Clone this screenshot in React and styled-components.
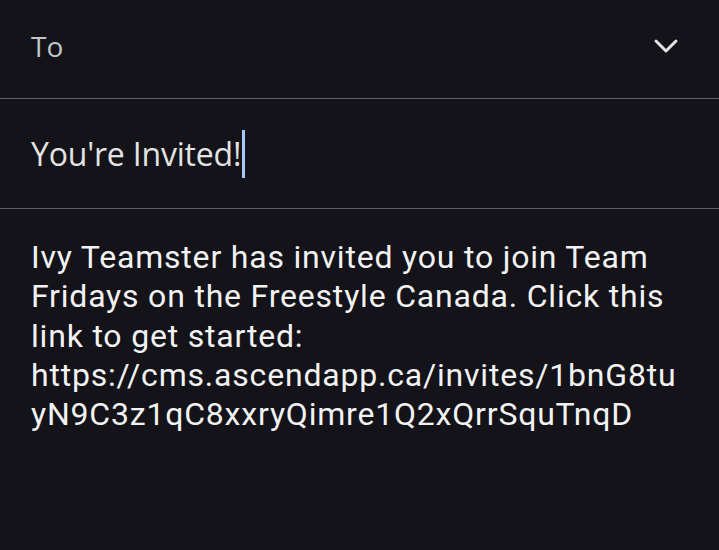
import React from 'react';
import styled, {createGlobalStyle} from 'styled-components';

const Global = createGlobalStyle`
  html, body {
    margin: 0;
    background: #131319;
  }
`

const Screen = styled.div`
  width: 719px;
  height: 550px;
  background: #131319;
  display: flex;
  flex-direction: column;
  overflow: hidden;
`

const Row = styled.div`
  height: ${props => props.h}px;
  display: flex;
  align-items: center;
  padding: 0 31px ${props => props.lift || 0}px;
  border-bottom: 1px solid #5c5f64;
  box-sizing: border-box;
`

const Label = styled.span`
  flex: 1;
  font-family: "Open Sans", sans-serif;
  font-size: 28px;
  color: #c4c7c5;
`

const Chevron = styled.svg`
  width: 26px;
  height: 18px;
  margin-right: 9px;
`

const Subject = styled.span`
  font-family: "Open Sans", sans-serif;
  font-size: 32px;
  letter-spacing: -0.2px;
  color: #e3e3e3;
  display: flex;
  align-items: center;
`

const Caret = styled.span`
  display: inline-block;
  width: 3px;
  height: 48px;
  margin-left: 1px;
  background: #a8c7fa;
`

const Body = styled.div`
  padding: 29px 31px;
  font-family: Roboto, sans-serif;
  font-size: 32px;
  letter-spacing: 0.8px;
  line-height: 39.3px;
  color: #f2f2f2;
  overflow-wrap: anywhere;
  width: 650px;
`

const App = () => {
  return (
    <>
      <Global/>
      <Screen>
        <Row h={99} lift={6}>
          <Label>To</Label>
          <Chevron viewBox="0 0 26 18">
            <path d="M3 4L13 14L23 4" fill="none" stroke="#e3e3e3" strokeWidth="3" strokeLinecap="round" strokeLinejoin="round"/>
          </Chevron>
        </Row>
        <Row h={110}>
          <Subject>You're Invited!<Caret/></Subject>
        </Row>
        <Body>
          Ivy Teamster has invited you to join Team Fridays on the Freestyle Canada. Click this link to get started: https://cms.ascendapp.ca/invites/1bnG8tuyN9C3z1qC8xxryQimre1Q2xQrrSquTnqD
        </Body>
      </Screen>
    </>
  )
}

export default App
